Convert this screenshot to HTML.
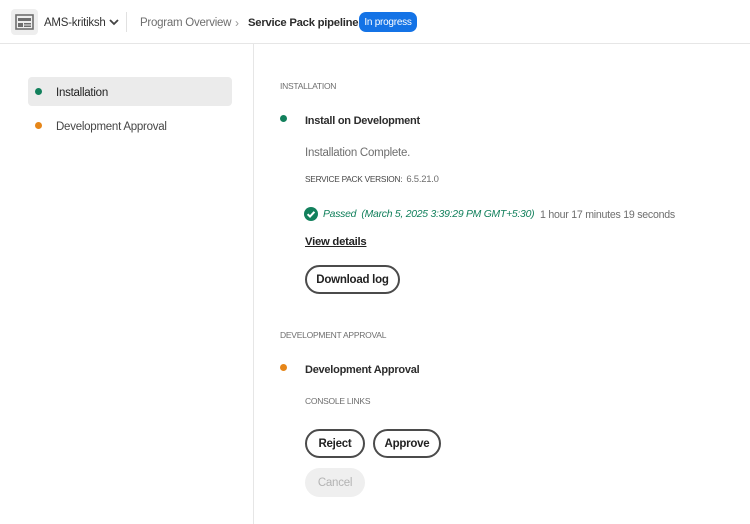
<!DOCTYPE html>
<html><head><meta charset="utf-8"><style>
*{margin:0;padding:0;box-sizing:border-box}
body{width:750px;height:524px;background:#fff;font-family:"Liberation Sans",sans-serif;position:relative;overflow:hidden;color:#222;letter-spacing:-0.25px}
.a{position:absolute;white-space:nowrap}
.t{transform:translateY(2px)}
.btn{position:absolute;border:2px solid #4b4b4b;border-radius:16px;height:29px;font-weight:bold;font-size:11.5px;color:#222;display:flex;align-items:center;justify-content:center;padding-top:1px}
.dot{position:absolute;width:7px;height:7px;border-radius:50%}
</style></head><body>
<div class="a" style="left:0;top:43px;width:750px;height:1px;background:#e6e6e6"></div>
<div class="a" style="left:253px;top:44px;width:1px;height:480px;background:#e6e6e6"></div>
<div class="a" style="left:11px;top:9px;width:27px;height:26px;background:#eeeeee;border-radius:4px"></div>
<svg class="a" style="left:15px;top:14px" width="19" height="16" viewBox="0 0 19 16"><rect x="1" y="1" width="17" height="14" fill="none" stroke="#6e6e6e" stroke-width="1.6"/><rect x="3" y="4" width="13" height="3" fill="#6e6e6e"/><rect x="3" y="9" width="5" height="4" fill="#6e6e6e"/><rect x="9" y="9" width="7" height="1.5" fill="#6e6e6e"/><rect x="9" y="11.5" width="7" height="1.5" fill="#6e6e6e"/></svg>
<div class="a t" style="left:44px;top:15px;font-size:11.5px;color:#333">AMS-kritiksh</div>
<svg class="a" style="left:109px;top:18px" width="10" height="8" viewBox="0 0 10 8"><path d="M1 2l4 4 4-4" fill="none" stroke="#444" stroke-width="1.8"/></svg>
<div class="a" style="left:126px;top:12px;width:1px;height:20px;background:#e1e1e1"></div>
<div class="a t" style="left:140px;top:15px;font-size:11.5px;color:#6e6e6e">Program Overview</div>
<div class="a t" style="left:235px;top:14px;font-size:12px;color:#999">›</div>
<div class="a t" style="left:248px;top:15px;font-size:11.3px;font-weight:bold;color:#2c2c2c">Service Pack pipeline</div>
<div class="a" style="left:359px;top:12px;width:58px;height:20px;background:#1473e6;border-radius:7px;color:#fff;font-size:10px;display:flex;align-items:center;justify-content:center;padding-top:1px">In progress</div>

<div class="a" style="left:28px;top:77px;width:204px;height:29px;background:#ebebeb;border-radius:4px"></div>
<div class="dot" style="left:35px;top:88px;background:#12805c"></div>
<div class="a t" style="left:56px;top:85px;font-size:11.5px;color:#222">Installation</div>
<div class="dot" style="left:35px;top:122px;background:#e68619"></div>
<div class="a t" style="left:56px;top:119px;font-size:11.5px;color:#464646">Development Approval</div>

<div class="a t" style="left:280px;top:79px;font-size:8.5px;color:#6e6e6e">INSTALLATION</div>
<div class="dot" style="left:280px;top:115px;background:#12805c"></div>
<div class="a t" style="left:305px;top:113px;font-size:11px;font-weight:bold;color:#2c2c2c">Install on Development</div>
<div class="a t" style="left:305px;top:145px;font-size:11.5px;color:#6e6e6e">Installation Complete.</div>
<div class="a t" style="left:305px;top:172px;font-size:8.3px;color:#464646">SERVICE PACK VERSION:&nbsp; <span style="font-size:9.5px;color:#6e6e6e">6.5.21.0</span></div>
<svg class="a" style="left:304px;top:207px" width="14" height="14" viewBox="0 0 14 14"><circle cx="7" cy="7" r="7" fill="#12805c"/><path d="M3.6 7.2l2.4 2.4 4.4-4.8" fill="none" stroke="#fff" stroke-width="2"/></svg>
<div class="a t" style="left:323px;top:207px;font-size:10.4px;font-style:italic;color:#12805c">Passed&nbsp; (March 5, 2025 3:39:29 PM GMT+5:30)</div>
<div class="a t" style="left:540px;top:207px;font-size:10.6px;color:#6e6e6e">1 hour 17 minutes 19 seconds</div>
<div class="a t" style="left:305px;top:234px;font-size:11.3px;font-weight:bold;text-decoration:underline;color:#222">View details</div>
<div class="btn" style="left:305px;top:265px;width:95px">Download log</div>

<div class="a t" style="left:280px;top:328px;font-size:8.5px;color:#6e6e6e">DEVELOPMENT APPROVAL</div>
<div class="dot" style="left:280px;top:364px;background:#e68619"></div>
<div class="a t" style="left:305px;top:362px;font-size:11px;font-weight:bold;color:#2c2c2c">Development Approval</div>
<div class="a t" style="left:305px;top:394px;font-size:8.5px;color:#6e6e6e">CONSOLE LINKS</div>
<div class="btn" style="left:305px;top:429px;width:60px">Reject</div>
<div class="btn" style="left:373px;top:429px;width:68px">Approve</div>
<div class="btn" style="left:305px;top:468px;width:60px;border:none;background:#efefef;color:#b3b3b3;font-weight:normal">Cancel</div>
</body></html>
